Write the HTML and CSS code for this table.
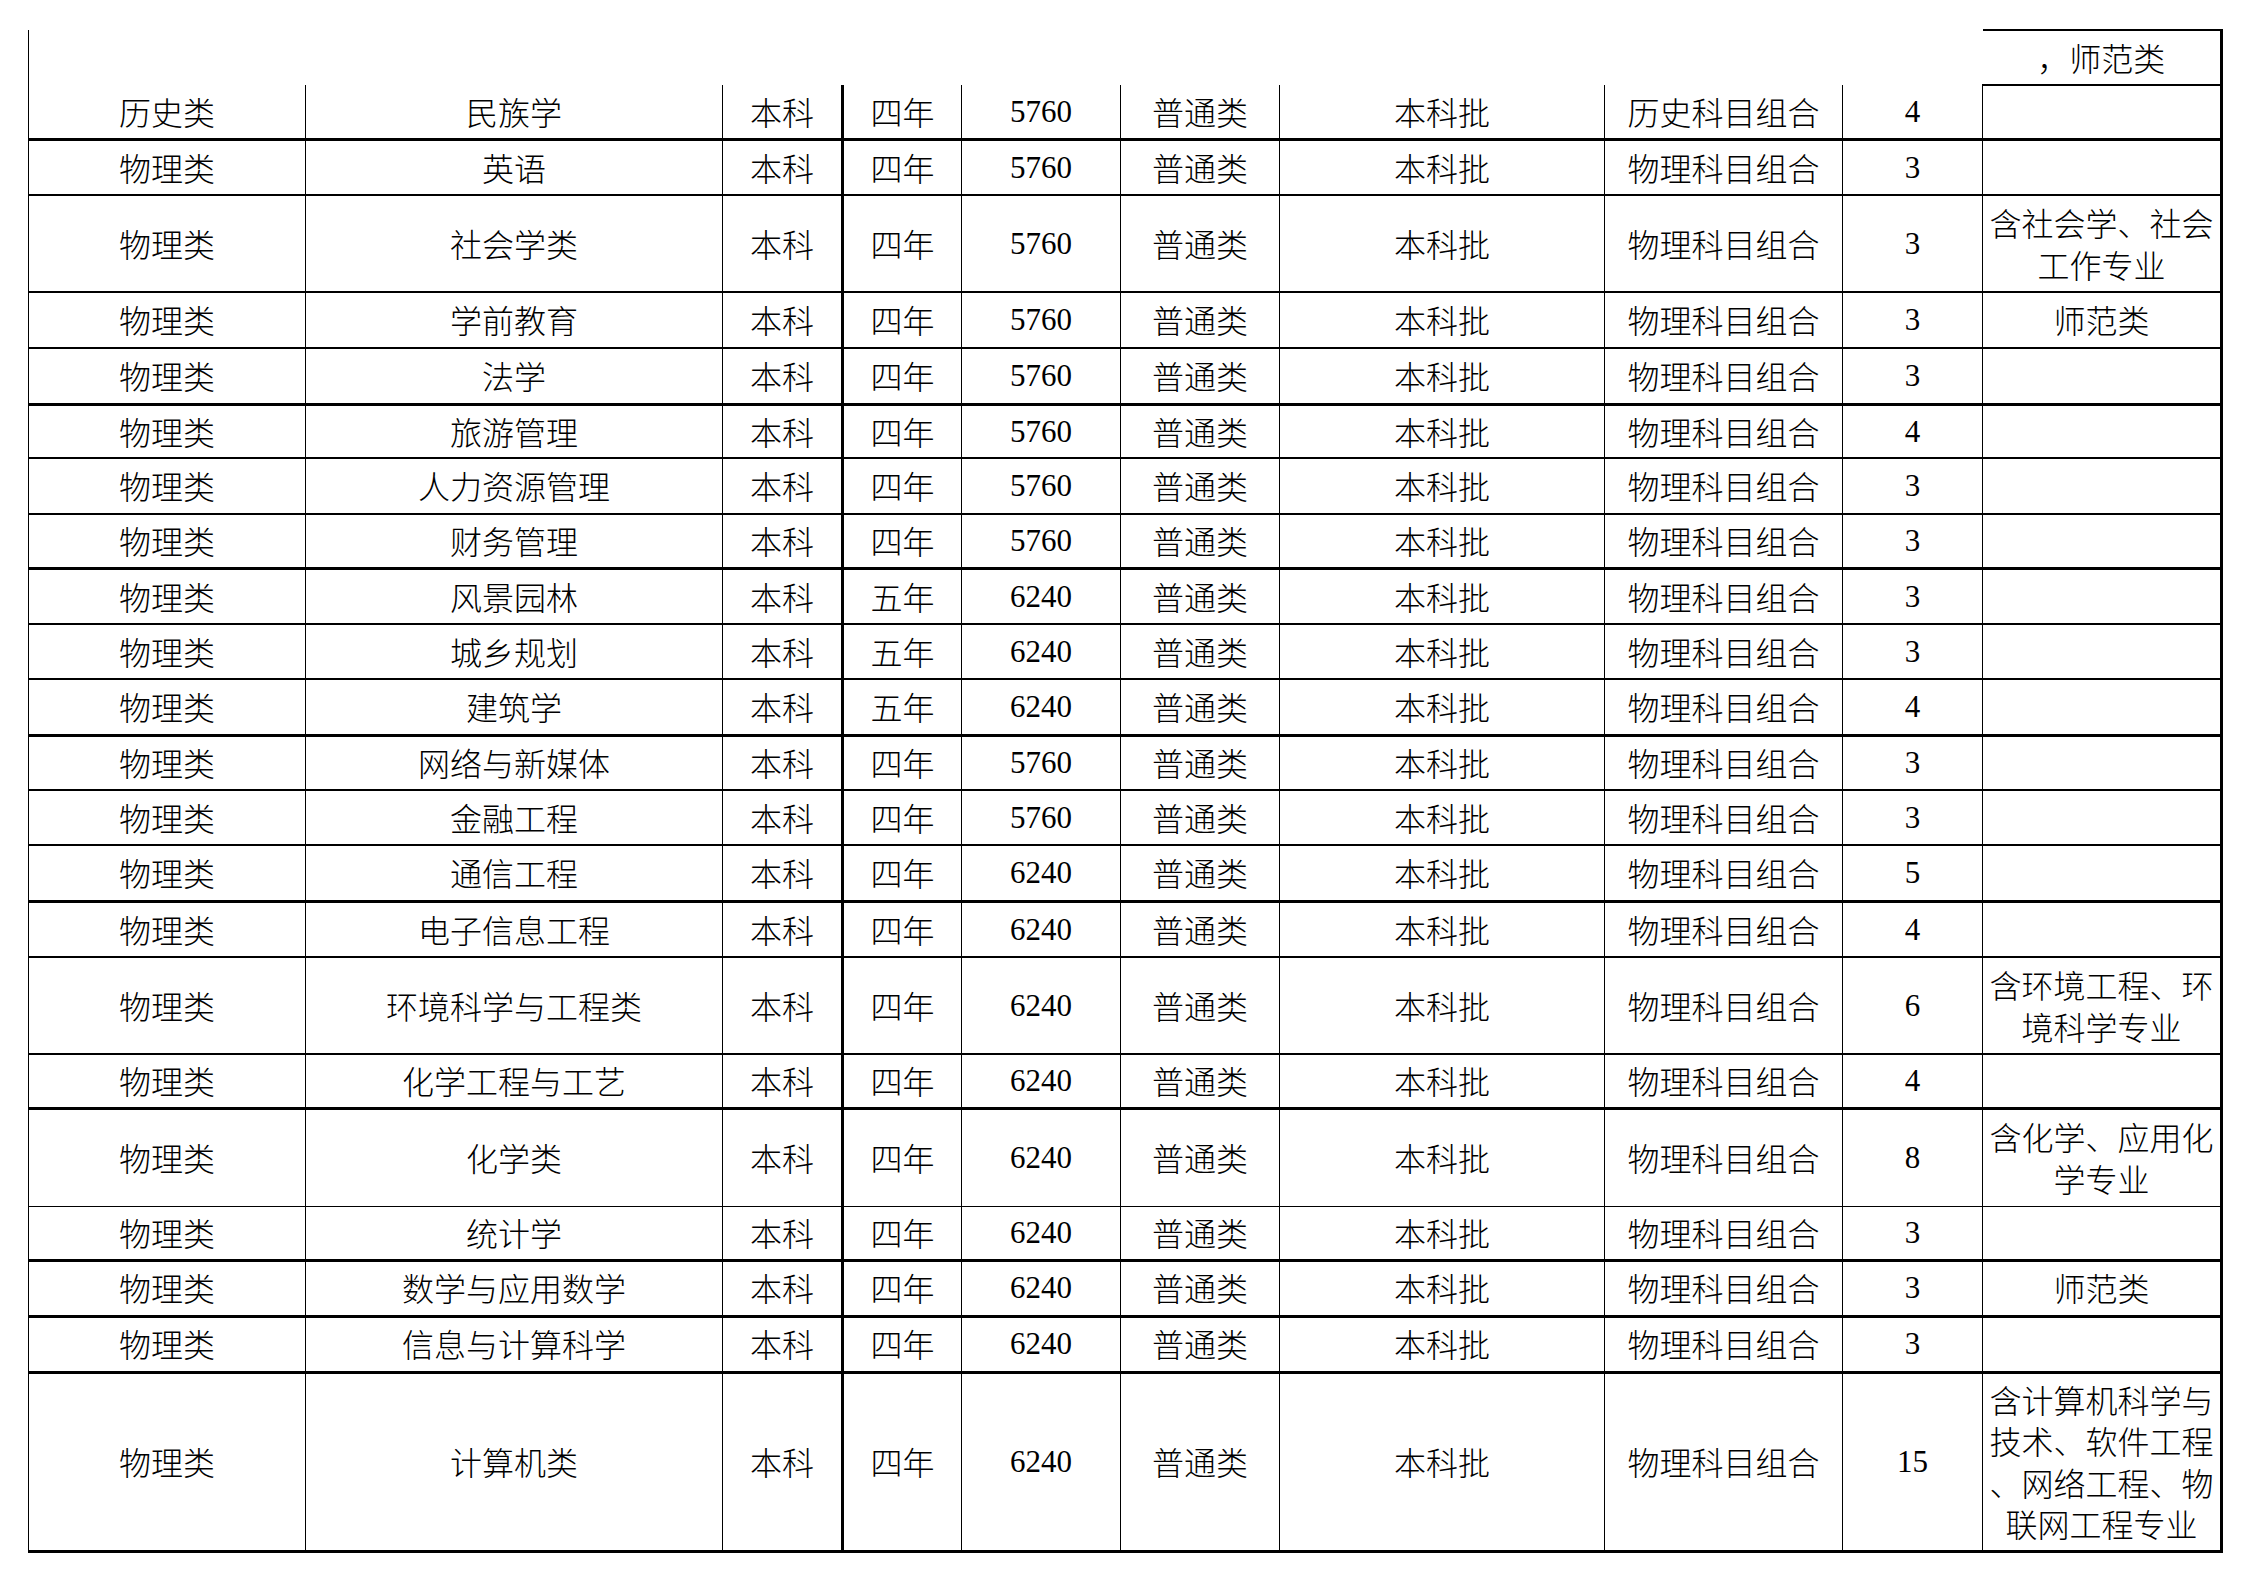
FILE: index.html
```html
<!DOCTYPE html>
<html lang="zh-CN">
<head>
<meta charset="utf-8">
<title>招生计划</title>
<link rel="stylesheet" href="styles.css">
</head>
<body>
<table class="plan">
  <colgroup>
    <col class="c1"><col class="c2"><col class="c3"><col class="c4"><col class="c5">
    <col class="c6"><col class="c7"><col class="c8"><col class="c9"><col class="c10">
  </colgroup>
  <tbody>
    <tr class="head h55">
      <td class="first"></td><td></td><td></td><td></td><td></td><td></td><td></td><td></td><td></td>
      <td class="tail">，师范类</td>
    </tr>
    <tr class="h54 b3"><td>历史类</td><td>民族学</td><td>本科</td><td>四年</td><td class="num">5760</td><td>普通类</td><td>本科批</td><td>历史科目组合</td><td class="num">4</td><td></td></tr>
    <tr class="h56 b2"><td>物理类</td><td>英语</td><td>本科</td><td>四年</td><td class="num">5760</td><td>普通类</td><td>本科批</td><td>物理科目组合</td><td class="num">3</td><td></td></tr>
    <tr class="h97 b2"><td>物理类</td><td>社会学类</td><td>本科</td><td>四年</td><td class="num">5760</td><td>普通类</td><td>本科批</td><td>物理科目组合</td><td class="num">3</td><td class="note">含社会学、社会<br>工作专业</td></tr>
    <tr class="h56 b2"><td>物理类</td><td>学前教育</td><td>本科</td><td>四年</td><td class="num">5760</td><td>普通类</td><td>本科批</td><td>物理科目组合</td><td class="num">3</td><td class="note">师范类</td></tr>
    <tr class="h56 b3"><td>物理类</td><td>法学</td><td>本科</td><td>四年</td><td class="num">5760</td><td>普通类</td><td>本科批</td><td>物理科目组合</td><td class="num">3</td><td></td></tr>
    <tr class="h54 b2"><td>物理类</td><td>旅游管理</td><td>本科</td><td>四年</td><td class="num">5760</td><td>普通类</td><td>本科批</td><td>物理科目组合</td><td class="num">4</td><td></td></tr>
    <tr class="h56 b2"><td>物理类</td><td>人力资源管理</td><td>本科</td><td>四年</td><td class="num">5760</td><td>普通类</td><td>本科批</td><td>物理科目组合</td><td class="num">3</td><td></td></tr>
    <tr class="h54 b3"><td>物理类</td><td>财务管理</td><td>本科</td><td>四年</td><td class="num">5760</td><td>普通类</td><td>本科批</td><td>物理科目组合</td><td class="num">3</td><td></td></tr>
    <tr class="h56 b2"><td>物理类</td><td>风景园林</td><td>本科</td><td>五年</td><td class="num">6240</td><td>普通类</td><td>本科批</td><td>物理科目组合</td><td class="num">3</td><td></td></tr>
    <tr class="h55 b2"><td>物理类</td><td>城乡规划</td><td>本科</td><td>五年</td><td class="num">6240</td><td>普通类</td><td>本科批</td><td>物理科目组合</td><td class="num">3</td><td></td></tr>
    <tr class="h56 b3"><td>物理类</td><td>建筑学</td><td>本科</td><td>五年</td><td class="num">6240</td><td>普通类</td><td>本科批</td><td>物理科目组合</td><td class="num">4</td><td></td></tr>
    <tr class="h55 b2"><td>物理类</td><td>网络与新媒体</td><td>本科</td><td>四年</td><td class="num">5760</td><td>普通类</td><td>本科批</td><td>物理科目组合</td><td class="num">3</td><td></td></tr>
    <tr class="h55 b2"><td>物理类</td><td>金融工程</td><td>本科</td><td>四年</td><td class="num">5760</td><td>普通类</td><td>本科批</td><td>物理科目组合</td><td class="num">3</td><td></td></tr>
    <tr class="h56 b3"><td>物理类</td><td>通信工程</td><td>本科</td><td>四年</td><td class="num">6240</td><td>普通类</td><td>本科批</td><td>物理科目组合</td><td class="num">5</td><td></td></tr>
    <tr class="h56 b2"><td>物理类</td><td>电子信息工程</td><td>本科</td><td>四年</td><td class="num">6240</td><td>普通类</td><td>本科批</td><td>物理科目组合</td><td class="num">4</td><td></td></tr>
    <tr class="h97 b2"><td>物理类</td><td>环境科学与工程类</td><td>本科</td><td>四年</td><td class="num">6240</td><td>普通类</td><td>本科批</td><td>物理科目组合</td><td class="num">6</td><td class="note">含环境工程、环<br>境科学专业</td></tr>
    <tr class="h54 b3"><td>物理类</td><td>化学工程与工艺</td><td>本科</td><td>四年</td><td class="num">6240</td><td>普通类</td><td>本科批</td><td>物理科目组合</td><td class="num">4</td><td></td></tr>
    <tr class="h98 b1"><td>物理类</td><td>化学类</td><td>本科</td><td>四年</td><td class="num">6240</td><td>普通类</td><td>本科批</td><td>物理科目组合</td><td class="num">8</td><td class="note">含化学、应用化<br>学专业</td></tr>
    <tr class="h54 b3"><td>物理类</td><td>统计学</td><td>本科</td><td>四年</td><td class="num">6240</td><td>普通类</td><td>本科批</td><td>物理科目组合</td><td class="num">3</td><td></td></tr>
    <tr class="h56 b3"><td>物理类</td><td>数学与应用数学</td><td>本科</td><td>四年</td><td class="num">6240</td><td>普通类</td><td>本科批</td><td>物理科目组合</td><td class="num">3</td><td class="note">师范类</td></tr>
    <tr class="h56 b3"><td>物理类</td><td>信息与计算科学</td><td>本科</td><td>四年</td><td class="num">6240</td><td>普通类</td><td>本科批</td><td>物理科目组合</td><td class="num">3</td><td></td></tr>
    <tr class="h179 b3"><td>物理类</td><td>计算机类</td><td>本科</td><td>四年</td><td class="num">6240</td><td>普通类</td><td>本科批</td><td>物理科目组合</td><td class="num">15</td><td class="note">含计算机科学与<br>技术、软件工程<br>、网络工程、物<br>联网工程专业</td></tr>
  </tbody>
</table>
</body>
</html>
```

FILE: styles.css
```css
html, body {
  margin: 0;
  padding: 0;
  background: #ffffff;
}

body {
  padding: 29px 0 0 28px;
  font-family: "Liberation Serif", "Noto Sans CJK SC", serif;
  color: #000000;
}

.plan {
  border-collapse: collapse;
  table-layout: fixed;
  width: 2193px;
}

.c1 { width: 277px; }
.c2 { width: 417px; }
.c3 { width: 120px; }
.c4 { width: 119px; }
.c5 { width: 159px; }
.c6 { width: 159px; }
.c7 { width: 325px; }
.c8 { width: 238px; }
.c9 { width: 140px; }
.c10 { width: 239px; }

.plan td {
  padding: 0;
  text-align: center;
  vertical-align: middle;
  font-family: "Noto Sans CJK SC", sans-serif;
  font-size: 32px;
  font-weight: 300;
  line-height: 41.5px;
  white-space: nowrap;
  border-left: 1px solid #000;
  border-right: 1px solid #000;
}

.plan td:nth-child(4) {
  border-left: 3px solid #000;
}

.plan td:last-child {
  border-right: 3px solid #000;
}

.plan td.num {
  font-family: "Liberation Serif", serif;
  font-size: 31px;
  font-weight: 400;
}

.plan tr.head td {
  border: none;
}

.plan tr.head td.first {
  border-left: 1px solid #000;
}

.plan tr.head td.tail {
  border-top: 2px solid #000;
  border-right: 3px solid #000;
  border-bottom: 2px solid #000;
}

.b1 td { border-bottom: 1px solid #000; }
.b2 td { border-bottom: 2px solid #000; }
.b3 td { border-bottom: 3px solid #000; }

.h54 { height: 54px; }
.h55 { height: 55px; }
.h56 { height: 56px; }
.h97 { height: 97px; }
.h98 { height: 98px; }
.h179 { height: 179px; }
```
